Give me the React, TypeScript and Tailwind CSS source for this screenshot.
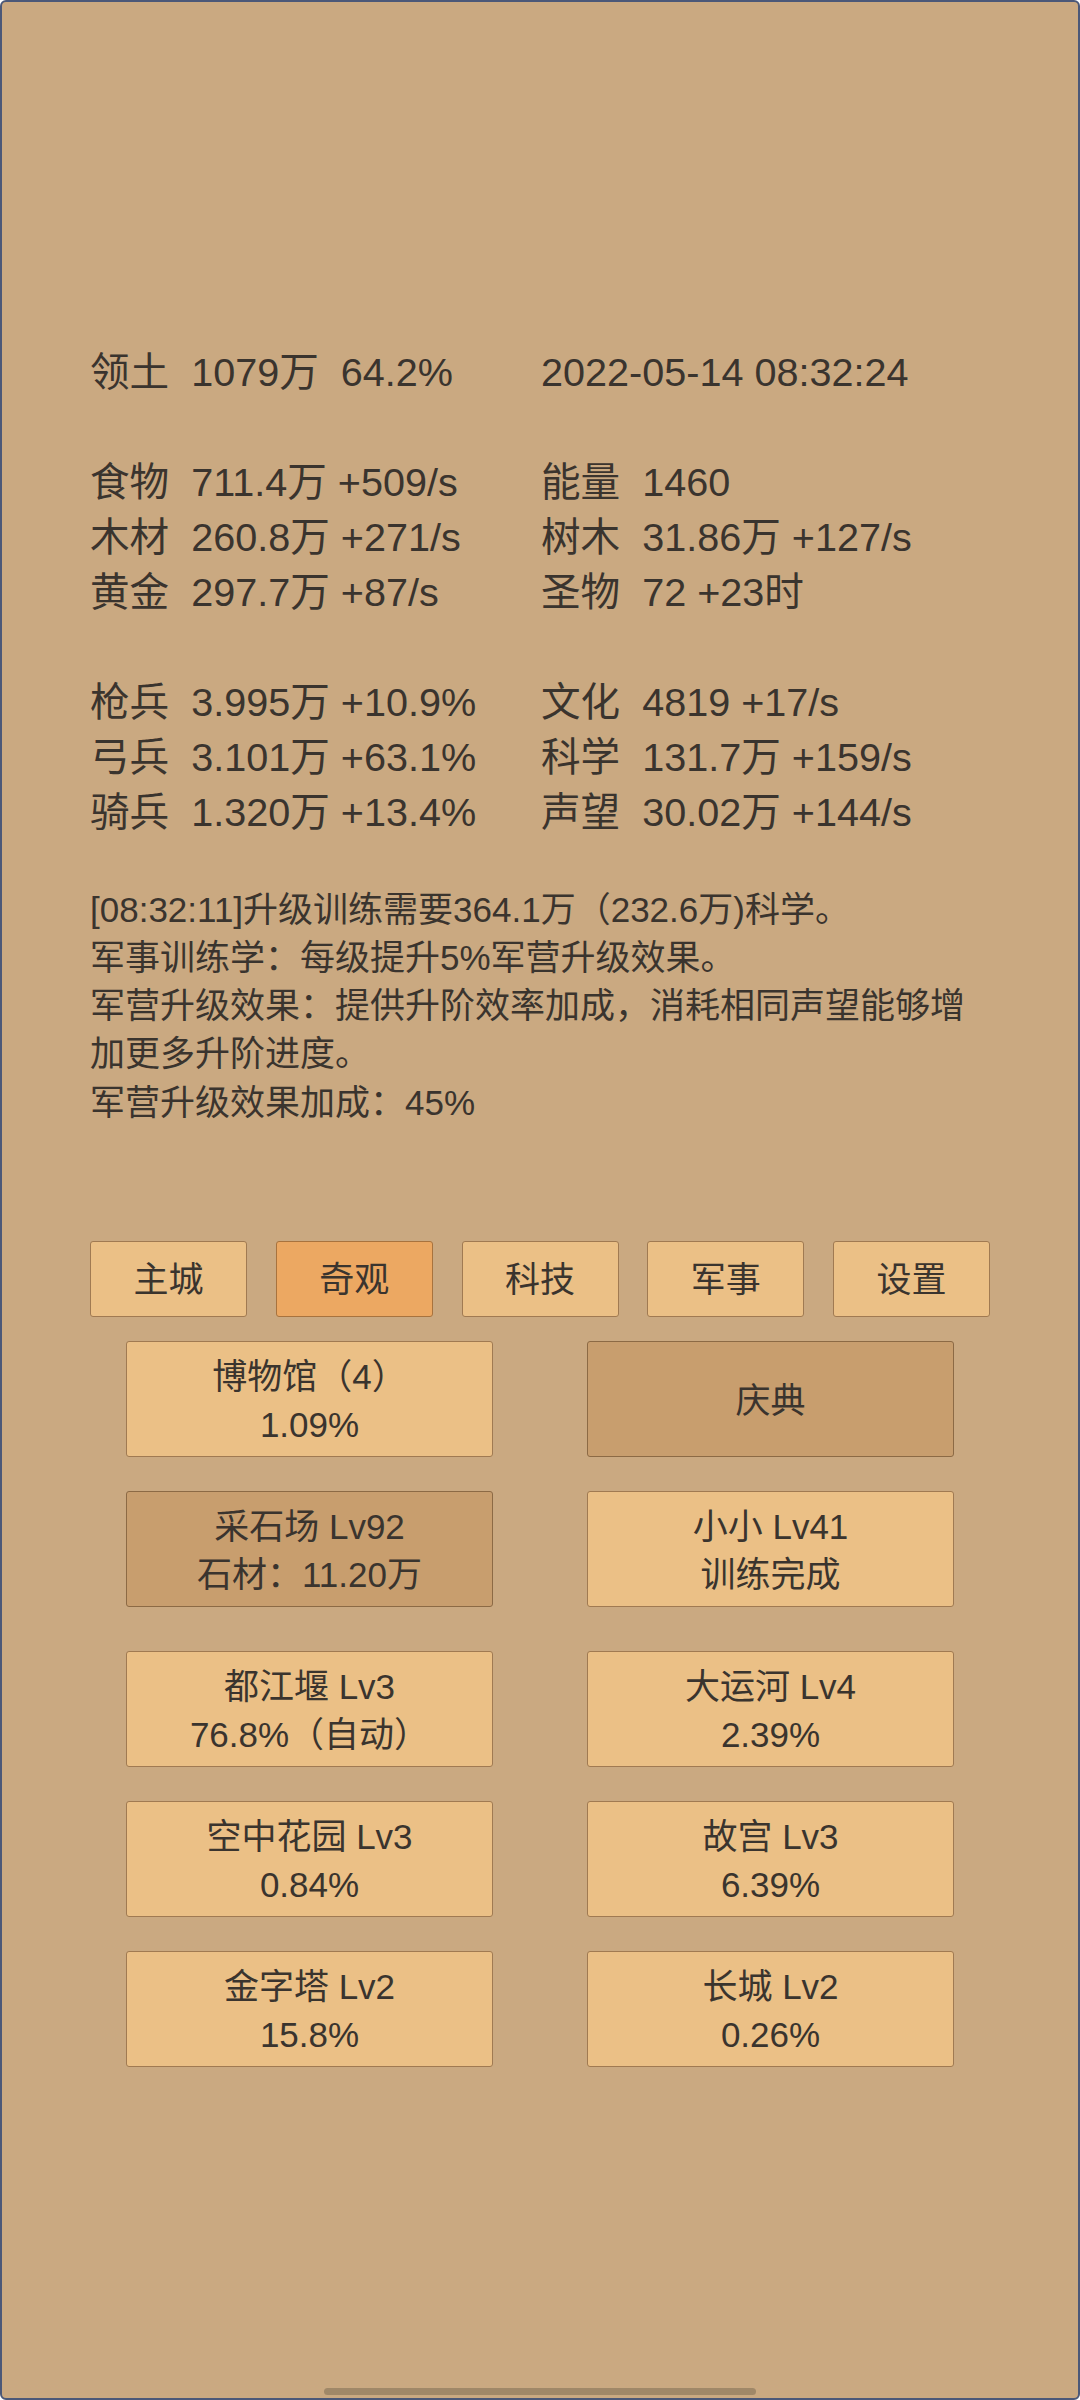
import React from "react";

type StatRow = [string, string] | null;

const stats: StatRow[] = [
  ["领土  1079万  64.2%", "2022-05-14 08:32:24"],
  null,
  ["食物  711.4万 +509/s", "能量  1460"],
  ["木材  260.8万 +271/s", "树木  31.86万 +127/s"],
  ["黄金  297.7万 +87/s", "圣物  72 +23时"],
  null,
  ["枪兵  3.995万 +10.9%", "文化  4819 +17/s"],
  ["弓兵  3.101万 +63.1%", "科学  131.7万 +159/s"],
  ["骑兵  1.320万 +13.4%", "声望  30.02万 +144/s"],
];

const tabs = ["主城", "奇观", "科技", "军事", "设置"];

interface Card {
  title: string;
  sub?: string;
  dim?: boolean;
}

const topCards: Card[][] = [
  [
    { title: "博物馆（4）", sub: "1.09%" },
    { title: "庆典", dim: true },
  ],
  [
    { title: "采石场 Lv92", sub: "石材：11.20万", dim: true },
    { title: "小小 Lv41", sub: "训练完成" },
  ],
];

const wonderCards: Card[][] = [
  [
    { title: "都江堰 Lv3", sub: "76.8%（自动）" },
    { title: "大运河 Lv4", sub: "2.39%" },
  ],
  [
    { title: "空中花园 Lv3", sub: "0.84%" },
    { title: "故宫 Lv3", sub: "6.39%" },
  ],
  [
    { title: "金字塔 Lv2", sub: "15.8%" },
    { title: "长城 Lv2", sub: "0.26%" },
  ],
];

const CardBox = ({ card }: { card: Card }) => (
  <div
    className={`w-[367px] h-[116px] pt-[4px] flex flex-col items-center justify-center rounded-[3px] border text-[35px] leading-snug ${
      card.dim ? "bg-[#c89e6e] border-[#8c6a45]" : "bg-[#ebc086] border-[#a07a52]"
    }`}
  >
    <div>{card.title}</div>
    {card.sub && <div>{card.sub}</div>}
  </div>
);

const CardGroup = ({ rows }: { rows: Card[][] }) => (
  <div className="flex flex-col gap-[34px]">
    {rows.map((row, i) => (
      <div key={i} className="flex justify-center gap-[94px]">
        {row.map((c) => (
          <CardBox key={c.title} card={c} />
        ))}
      </div>
    ))}
  </div>
);

export default function App() {
  const active = "奇观";

  return (
    <div
      className="relative w-[1080px] h-[2400px] overflow-hidden rounded-[6px] border-2 border-[#4b5878] bg-[#caa981] px-[88px] pt-[343px] text-[#3a342e]"
      style={{ fontFamily: "'Liberation Sans', 'Noto Sans CJK SC', sans-serif" }}
    >
      {/* 资源统计 */}
      <div className="grid grid-cols-[451px_1fr] text-[39.6px] leading-[55px] whitespace-pre">
        {stats.map((row, i) =>
          row ? (
            <React.Fragment key={i}>
              <div>{row[0]}</div>
              <div>{row[1]}</div>
            </React.Fragment>
          ) : (
            <div key={i} className="col-span-2 h-[55px]" />
          )
        )}
      </div>

      {/* 消息 */}
      <div className="mt-[46px] text-[35px] leading-snug">
        <div>[08:32:11]升级训练需要364.1万（232.6万)科学。</div>
        <div>军事训练学：每级提升5%军营升级效果。</div>
        <div>军营升级效果：提供升阶效率加成，消耗相同声望能够增加更多升阶进度。</div>
        <div>军营升级效果加成：45%</div>
      </div>

      {/* 标签页 */}
      <div className="mt-[114px] flex justify-between">
        {tabs.map((t) => (
          <div
            key={t}
            className={`w-[157px] h-[76px] pt-[3px] flex items-center justify-center rounded-[3px] border text-[35px] ${
              t === active ? "bg-[#eca862] border-[#a8733e]" : "bg-[#ebc086] border-[#a07a52]"
            }`}
          >
            {t}
          </div>
        ))}
      </div>

      <div className="mt-[24px] flex flex-col gap-[44px]">
        <CardGroup rows={topCards} />
        <CardGroup rows={wonderCards} />
      </div>

      {/* 底部指示条 */}
      <div className="absolute bottom-[3px] left-[322px] w-[432px] h-[7px] rounded-full bg-[#a08868]" />
    </div>
  );
}
